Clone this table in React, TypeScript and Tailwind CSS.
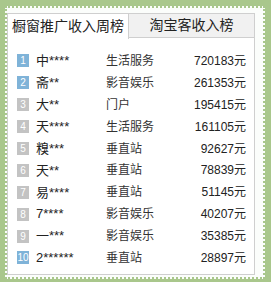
const rows = [
  { rank: 1, name: '中****', type: '生活服务', amount: '720183元' },
  { rank: 2, name: '斋**', type: '影音娱乐', amount: '261353元' },
  { rank: 3, name: '大**', type: '门户', amount: '195415元' },
  { rank: 4, name: '天****', type: '生活服务', amount: '161105元' },
  { rank: 5, name: '糗***', type: '垂直站', amount: '92627元' },
  { rank: 6, name: '天**', type: '垂直站', amount: '78839元' },
  { rank: 7, name: '易****', type: '垂直站', amount: '51145元' },
  { rank: 8, name: '7****', type: '影音娱乐', amount: '40207元' },
  { rank: 9, name: '一***', type: '影音娱乐', amount: '35385元' },
  { rank: 10, name: '2******', type: '垂直站', amount: '28897元' },
]

const App = () => {
  return (
    <div
      className="w-[271px] h-[282px] bg-[#a9c78c] pt-[6px] pl-[5px] pr-[6px] pb-[3px]"
      style={{ fontFamily: '"Liberation Sans", "Noto Sans CJK SC", sans-serif' }}
    >
      <div className="h-full bg-[#fbfdfb] border-[2px] border-dotted border-[#a9c78c] pt-[5px] pr-[8px] pb-[2px]">
        <div className="h-full flex flex-col">
          <div className="flex h-[25px] text-[14px] text-[#222]">
            <div className="w-[122px] h-[26px] bg-white border border-b-0 border-[#cfcfcf] flex items-center justify-center z-10">
              橱窗推广收入周榜
            </div>
            <div className="flex-1 bg-[#f1f1f1] border-t border-r border-b border-[#cfcfcf] flex items-center justify-center">
              淘宝客收入榜
            </div>
          </div>
          <div className="flex-1 bg-white border border-t-0 border-[#cfcfcf] pt-[12px] pl-[9px] pr-[8px]">
            {rows.map((r) => (
              <div key={r.rank} className="flex items-center h-[21.9px] text-[12px] text-[#222]">
                <span
                  className={
                    'w-[12px] h-[13px] flex items-center justify-center text-[10px] text-white ' +
                    (r.rank === 1 || r.rank === 2 || r.rank === 10 ? 'bg-[#7fb3d8]' : 'bg-[#c3c3c3]')
                  }
                >
                  {r.rank}
                </span>
                <span className="ml-[7px] w-[70px] text-[13px]">{r.name}</span>
                <span className="w-[70px] text-[#333]">{r.type}</span>
                <span className="flex-1 text-right">{r.amount}</span>
              </div>
            ))}
          </div>
        </div>
      </div>
    </div>
  )
}

export default App
